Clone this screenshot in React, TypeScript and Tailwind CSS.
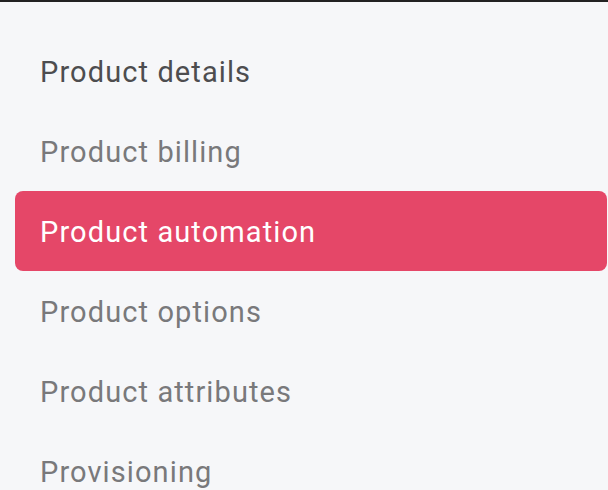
const items = [
  "Product details",
  "Product billing",
  "Product automation",
  "Product options",
  "Product attributes",
  "Provisioning",
];

export default function App() {
  const active = "Product automation";
  return (
    <div
      className="h-[490px] w-[608px] overflow-hidden border-t-2 border-[#222] bg-[#f6f7f9] pl-[15px] pr-px pt-[29px]"
      style={{ fontFamily: "Roboto, 'Liberation Sans', sans-serif" }}
    >
      <nav className="flex flex-col">
        {items.map((item, i) => {
          const selected = item === active;
          return (
            <div
              key={item}
              className={
                selected
                  ? "flex h-[80px] shrink-0 items-center rounded-lg bg-[#e54768] pl-[25px] pt-[4px] text-[29px] tracking-[1.1px] text-white"
                  : i === 0
                    ? "flex h-[80px] shrink-0 items-center pl-[25px] pt-[4px] text-[29px] tracking-[1.1px] text-[#4d4d4f]"
                    : "flex h-[80px] shrink-0 items-center pl-[25px] pt-[4px] text-[29px] tracking-[1.1px] text-[#79797b]"
              }
            >
              {item}
            </div>
          );
        })}
      </nav>
    </div>
  );
}
